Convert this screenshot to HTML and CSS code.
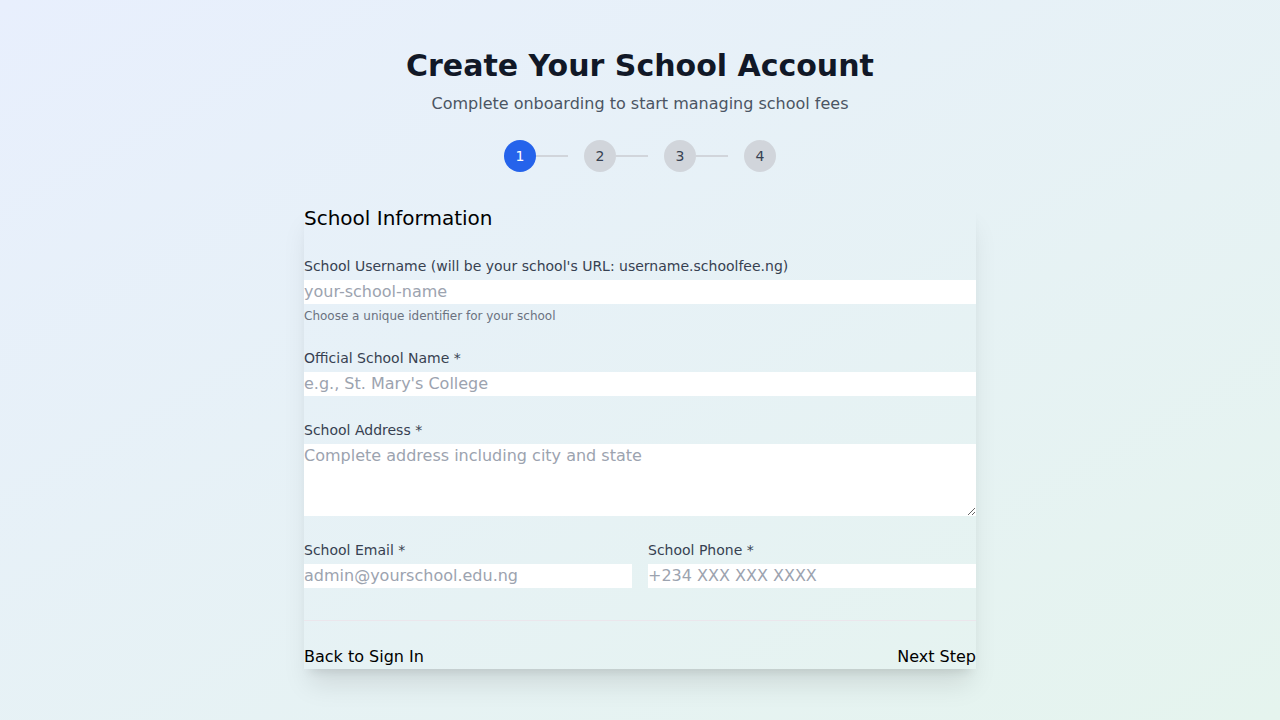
FILE: index.html
```html
<!DOCTYPE html>
<html lang="en">
<head>
<meta charset="utf-8">
<title>Create Your School Account</title>
<link rel="stylesheet" href="styles.css">
</head>
<body>
<main class="page">
  <header class="intro">
    <h1 class="title">Create Your School Account</h1>
    <p class="subtitle">Complete onboarding to start managing school fees</p>
  </header>

  <ol class="steps">
    <li class="step"><span class="dot dot-active">1</span><span class="line"></span></li>
    <li class="step"><span class="dot">2</span><span class="line"></span></li>
    <li class="step"><span class="dot">3</span><span class="line"></span></li>
    <li class="step"><span class="dot">4</span></li>
  </ol>

  <form class="card">
    <h2 class="card-title">School Information</h2>
    <div class="fields">
      <div class="field">
        <label class="label" for="username">School Username (will be your school's URL: username.schoolfee.ng)</label>
        <input class="input" id="username" type="text" placeholder="your-school-name">
        <p class="hint">Choose a unique identifier for your school</p>
      </div>
      <div class="field">
        <label class="label" for="name">Official School Name *</label>
        <input class="input" id="name" type="text" placeholder="e.g., St. Mary's College">
      </div>
      <div class="field">
        <label class="label" for="address">School Address *</label>
        <textarea class="input textarea" id="address" placeholder="Complete address including city and state"></textarea>
      </div>
      <div class="row">
        <div class="field">
          <label class="label" for="email">School Email *</label>
          <input class="input" id="email" type="email" placeholder="admin@yourschool.edu.ng">
        </div>
        <div class="field">
          <label class="label" for="phone">School Phone *</label>
          <input class="input" id="phone" type="tel" placeholder="+234 XXX XXX XXXX">
        </div>
      </div>
    </div>
    <div class="actions">
      <button class="btn" type="button">Back to Sign In</button>
      <button class="btn" type="button">Next Step</button>
    </div>
  </form>
</main>
</body>
</html>
```
FILE: styles.css
```css
* { box-sizing: border-box; }
html, body { margin: 0; padding: 0; }
body {
  min-height: 720px;
  font-family: "DejaVu Sans", sans-serif;
  background: linear-gradient(to bottom right, #e8effd, #e5f4ee);
  color: #000;
}
.page {
  padding: 48px 16px 0;
  display: flex;
  flex-direction: column;
  align-items: center;
}
.intro { text-align: center; }
.title {
  margin: 0;
  font-size: 30px;
  line-height: 36px;
  font-weight: 700;
  color: #111827;
}
.subtitle {
  margin: 8px 0 0;
  font-size: 16px;
  line-height: 24px;
  color: #4b5563;
}
.steps {
  list-style: none;
  margin: 24px 0 0;
  padding: 0;
  display: flex;
  gap: 16px;
}
.step { display: flex; align-items: center; }
.dot {
  width: 32px;
  height: 32px;
  border-radius: 50%;
  background: #d1d5db;
  color: #374151;
  font-size: 14px;
  display: flex;
  align-items: center;
  justify-content: center;
}
.dot-active { background: #2563eb; color: #fff; }
.line { width: 32px; height: 2px; background: #d1d5db; }
.card {
  margin-top: 32px;
  width: 672px;
  box-shadow: 0 20px 25px -5px rgba(0,0,0,.1), 0 8px 10px -6px rgba(0,0,0,.1);
}
.card-title {
  margin: 0;
  font-size: 20px;
  line-height: 28px;
  font-weight: 400;
}
.fields {
  margin-top: 24px;
  display: flex;
  flex-direction: column;
  gap: 24px;
}
.field { display: flex; flex-direction: column; }
.row { display: grid; grid-template-columns: 1fr 1fr; gap: 16px; }
.label {
  font-size: 14px;
  line-height: 20px;
  color: #374151;
  margin-bottom: 4px;
}
.input {
  display: block;
  width: 100%;
  height: 24px;
  margin: 0;
  padding: 0;
  border: 0;
  background: #fff;
  font-family: inherit;
  font-size: 16px;
  line-height: 24px;
  color: #111827;
}
.input::placeholder { color: #9ca3af; }
.textarea { height: 72px; resize: vertical; }
.hint {
  margin: 4px 0 0;
  font-size: 12px;
  line-height: 16px;
  color: #6b7280;
}
.actions {
  margin-top: 32px;
  padding-top: 24px;
  border-top: 1px solid #ebe6ec;
  display: flex;
  justify-content: space-between;
}
.btn {
  margin: 0;
  padding: 0;
  border: 0;
  background: none;
  font-family: inherit;
  font-size: 16px;
  line-height: 24px;
  color: #000;
  cursor: pointer;
}
```
